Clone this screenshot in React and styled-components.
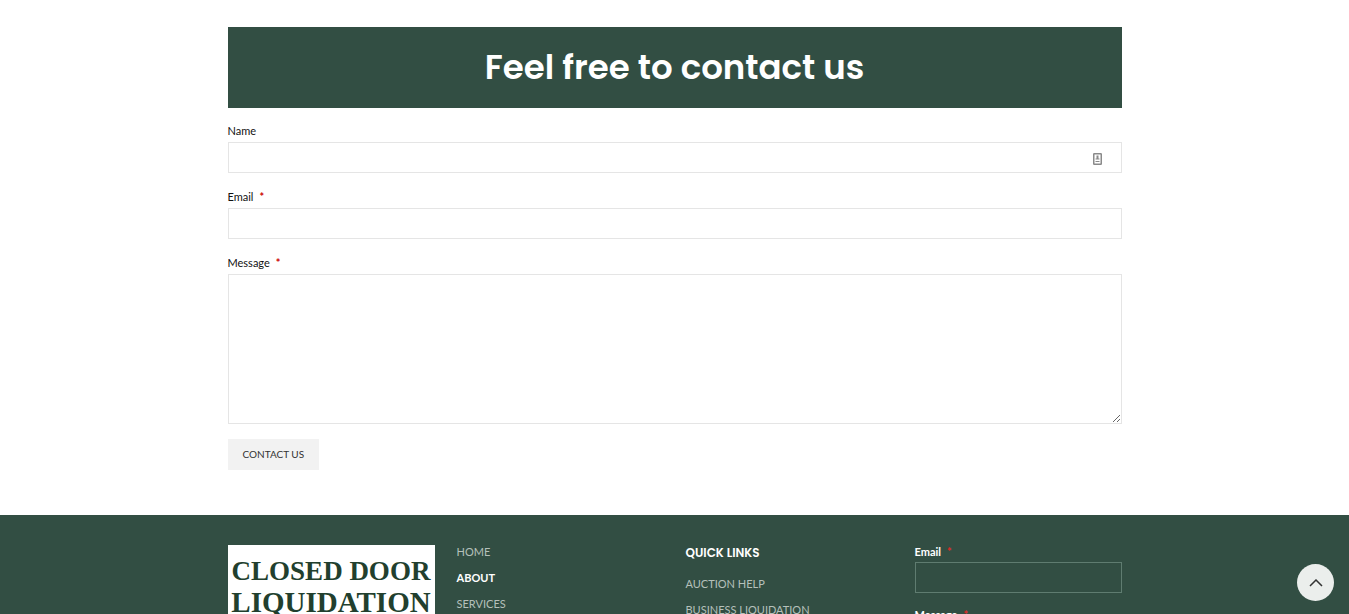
import React from "react";
import styled, { createGlobalStyle, css } from "styled-components";

const GlobalStyle = createGlobalStyle`
  * { box-sizing: border-box; }
  body {
    margin: 0;
    background: #fff;
    color: #111;
    font-family: Lato, "Liberation Sans", sans-serif;
    font-size: 11px;
    line-height: 20px;
  }
`;

const green = "#324e43";
const heading = css`font-family: Poppins, Inter, "Liberation Sans", sans-serif;`;

const Page = styled.div`
  min-height: 100vh;
`;

const Container = styled.div`
  width: 100%;
  max-width: 924px;
  margin: 0 auto;
  padding: 0 15px;
`;

const Contact = styled.main`
  padding: 27px 0 45px;
`;

const Banner = styled.h1`
  ${heading}
  margin: 0;
  padding: 20px;
  background: ${green};
  color: #fff;
  font-size: 34px;
  line-height: 41px;
  font-weight: 600;
  text-align: center;
`;

const ContactForm = styled.form`
  display: flex;
  flex-direction: column;
  align-items: flex-start;
  gap: 15px;
  padding-top: ${(p) => (p.$compact ? "0" : "14px")};
`;

const Field = styled.label`
  display: block;
  width: 100%;
  color: ${(p) => (p.$dark ? "#fff" : "#111")};
  font-weight: ${(p) => (p.$dark ? 700 : 400)};
`;

const LabelText = styled.span`
  display: block;
  padding-bottom: 3px;
  line-height: ${(p) => (p.$dark ? "14px" : "17px")};
`;

const Star = styled.span`
  margin-left: 6px;
  color: ${(p) => (p.$dark ? "#e02b27" : "#c00")};
  font-weight: 700;
`;

const InputWrap = styled.span`
  display: flex;
  position: relative;
`;

const control = css`
  display: block;
  width: 100%;
  border: 1px solid ${(p) => (p.$dark ? "#5f7c70" : "#e5e5e5")};
  border-radius: 0;
  background: transparent;
  color: inherit;
  font: inherit;
  padding: 5px 10px;
  outline: none;
`;

const TextInput = styled.input`
  ${control}
  height: 31px;
`;

const TextArea = styled.textarea`
  ${control}
  height: 150px;
  resize: vertical;
`;

const ContactIcon = styled.svg`
  position: absolute;
  right: 20px;
  top: 11px;
`;

const Submit = styled.button`
  height: 31px;
  padding: 0 15px 1px;
  border: 0;
  background: #f2f2f2;
  color: #333;
  font: inherit;
  font-size: 10px;
  text-transform: uppercase;
`;

const Footer = styled.footer`
  background: ${green};
  padding: 30px 0;
`;

const Columns = styled.div`
  display: grid;
  grid-template-columns: repeat(4, minmax(0, 1fr));
  gap: 22px;
  align-items: start;
`;

const Logo = styled.svg`
  display: block;
  width: 100%;
  background: #fff;
`;

const LinkList = styled.ul`
  display: flex;
  flex-direction: column;
  gap: 12px;
  margin: 0;
  padding: 0;
  list-style: none;
  line-height: 14px;
`;

const FooterLink = styled.a`
  color: ${(p) => (p.$active ? "#fff" : "#b5c0bb")};
  font-weight: ${(p) => (p.$active ? 700 : 400)};
  text-decoration: none;
  text-transform: uppercase;
`;

const FooterTitle = styled.h2`
  ${heading}
  margin: 0 0 16px;
  color: #fff;
  font-size: 12px;
  line-height: 16px;
  font-weight: 600;
`;

const BackToTop = styled.a`
  position: fixed;
  right: 15px;
  bottom: 13px;
  display: flex;
  align-items: center;
  justify-content: center;
  width: 37px;
  height: 37px;
  border-radius: 50%;
  background: #ebeeec;
  color: #333;
`;

const FormField = ({ label, required, dark, children }) => (
  <Field $dark={dark}>
    <LabelText $dark={dark}>
      {label}
      {required && <Star $dark={dark}>*</Star>}
    </LabelText>
    <InputWrap>{children}</InputWrap>
  </Field>
);

const Links = ({ items, active }) => (
  <LinkList>
    {items.map((item) => (
      <li key={item}>
        <FooterLink href="#" $active={item === active}>{item}</FooterLink>
      </li>
    ))}
  </LinkList>
);

export default function App() {
  return (
    <Page>
      <GlobalStyle />
      <Contact>
        <Container>
          <Banner>Feel free to contact us</Banner>
          <ContactForm>
            <FormField label="Name">
              <TextInput type="text" name="name" />
              <ContactIcon width="9" height="12" viewBox="0 0 9 12" aria-hidden="true">
                <rect x="0.75" y="0.75" width="7.5" height="10.5" rx="0.5" fill="#fff" stroke="#8a8a8a" strokeWidth="1.5" />
                <path d="M3.5 2.5h2v3h-2zM2.5 5.5h4v1h-4zM2.5 8h4v1h-4z" fill="#8a8a8a" />
              </ContactIcon>
            </FormField>
            <FormField label="Email" required>
              <TextInput type="email" name="email" />
            </FormField>
            <FormField label="Message" required>
              <TextArea name="message" />
            </FormField>
            <Submit type="button">Contact us</Submit>
          </ContactForm>
        </Container>
      </Contact>
      <Footer>
        <Container>
          <Columns>
            <Logo viewBox="0 0 207 104" role="img" aria-label="Closed Door Liquidation">
              <g fill="#223f2e" fontFamily="'Liberation Serif', serif" fontWeight="700" textAnchor="middle">
                <text x="103" y="35" fontSize="27">CLOSED DOOR</text>
                <text x="103" y="67" fontSize="29">LIQUIDATION</text>
              </g>
            </Logo>
            <Links items={["Home", "About", "Services"]} active="About" />
            <section>
              <FooterTitle>QUICK LINKS</FooterTitle>
              <Links items={["Auction Help", "Business Liquidation"]} />
            </section>
            <ContactForm $compact>
              <FormField label="Email" required dark>
                <TextInput type="email" name="footer-email" $dark />
              </FormField>
              <FormField label="Message" required dark>
                <TextArea name="footer-message" $dark />
              </FormField>
            </ContactForm>
          </Columns>
        </Container>
      </Footer>
      <BackToTop href="#" aria-label="Back to top">
        <svg width="14" height="8" viewBox="0 0 14 8" fill="none" stroke="currentColor" strokeWidth="1.5">
          <path d="M1 7l6-6 6 6" />
        </svg>
      </BackToTop>
    </Page>
  );
}
